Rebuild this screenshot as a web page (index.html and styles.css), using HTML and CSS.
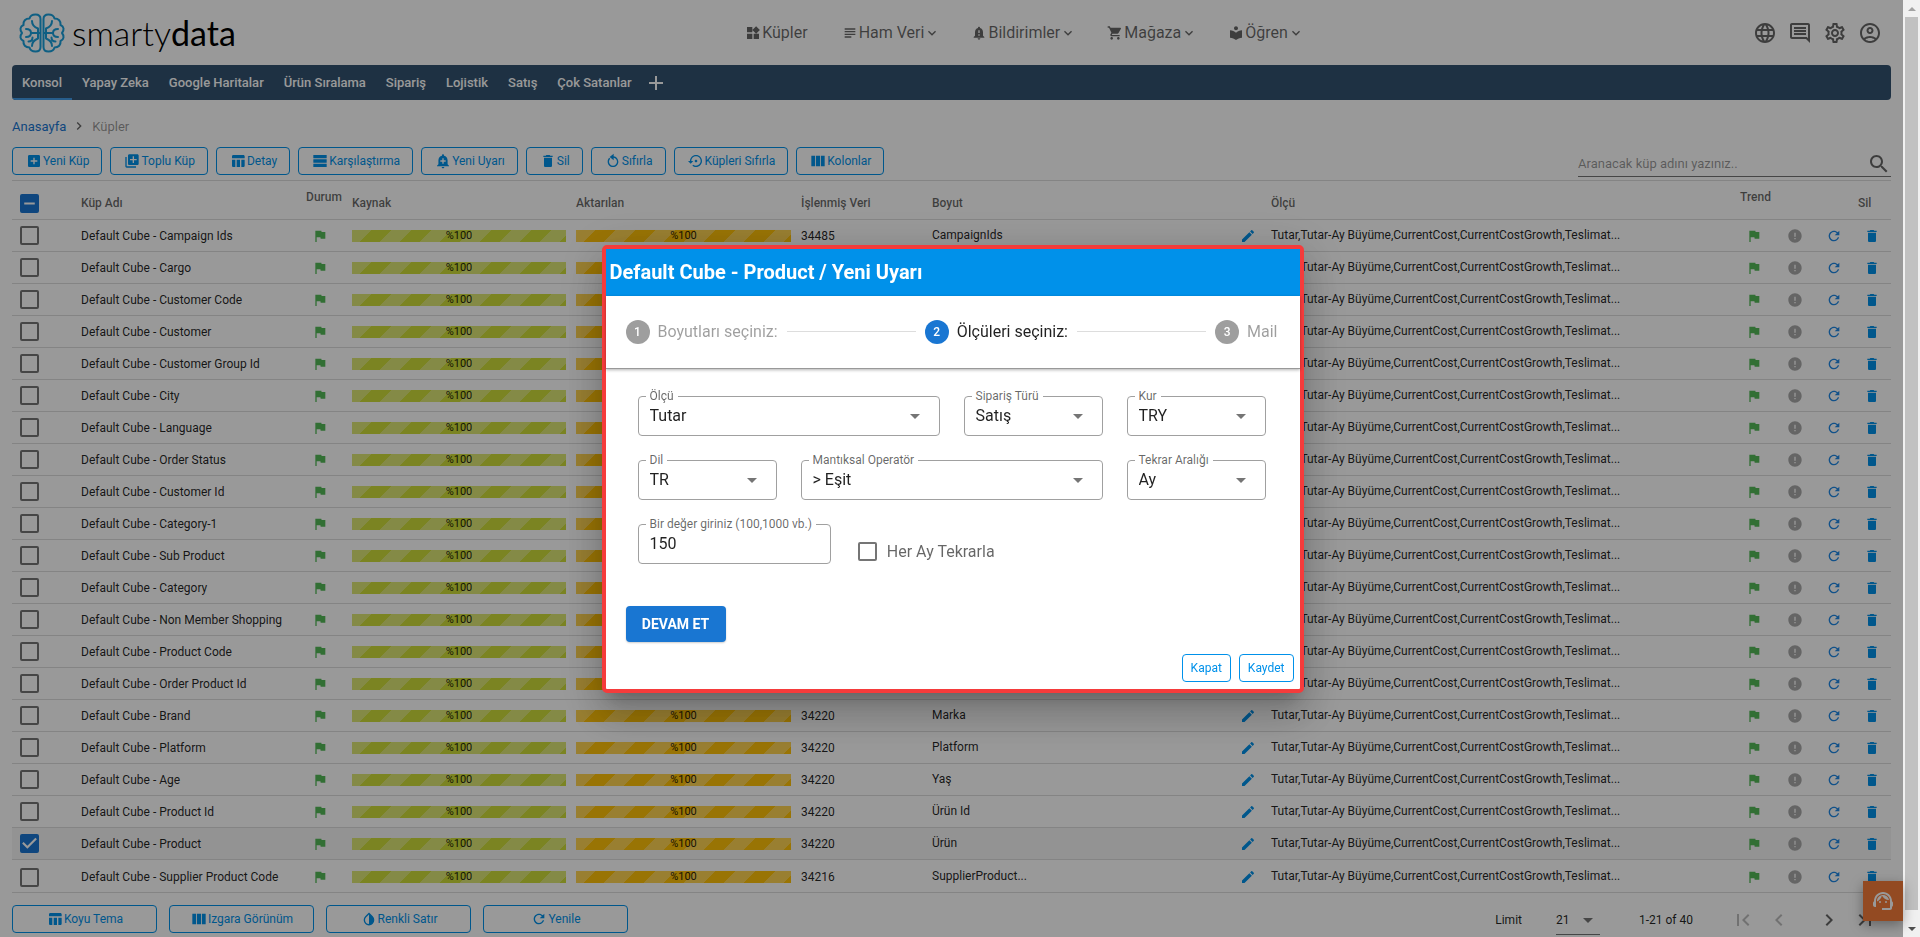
FILE: index.html
```html
<!DOCTYPE html>
<html lang="tr">
<head>
<meta charset="utf-8">
<title>smartydata</title>
<link rel="stylesheet" href="styles.css">
</head>
<body>
<svg class="sprite" aria-hidden="true">
  <symbol id="widgets" viewBox="0 0 24 24"><path d="M13 13v8h8v-8h-8zM3 21h8v-8H3v8zM3 3v8h8V3H3zm13.66-1.31L11 7.34 16.66 13l5.66-5.66-5.66-5.65z"/></symbol>
  <symbol id="subject" viewBox="0 0 24 24"><path d="M14 17H4v2h10v-2zm6-8H4v2h16V9zM4 15h16v-2H4v2zM4 5v2h16V5H4z"/></symbol>
  <symbol id="bell" viewBox="0 0 24 24"><path d="M18 16v-5c0-3.07-1.64-5.64-4.5-6.32V4c0-.83-.67-1.5-1.5-1.5s-1.5.67-1.5 1.5v.68C7.63 5.36 6 7.92 6 11v5l-2 2v1h16v-1l-2-2zm-5 0h-2v-2h2v2zm0-4h-2V8h2v4zm-1 10c1.1 0 2-.9 2-2h-4c0 1.1.89 2 2 2z"/></symbol>
  <symbol id="bell-add" viewBox="0 0 24 24"><path d="M10.01 21.01c0 1.1.89 1.99 1.99 1.99s1.99-.89 1.99-1.99h-3.98zm8.87-4.19V11c0-3.25-2.25-5.97-5.29-6.69v-.72C13.59 2.71 12.88 2 12 2s-1.59.71-1.59 1.59v.72C7.37 5.03 5.12 7.75 5.12 11v5.82L3 18.94V20h18v-1.06l-2.12-2.12zM16 13.01h-3v3h-2v-3H8V11h3V8h2v3h3v2.01z"/></symbol>
  <symbol id="cart" viewBox="0 0 24 24"><path d="M7 18c-1.1 0-1.99.9-1.99 2S5.9 22 7 22s2-.9 2-2-.9-2-2-2zM1 2v2h2l3.6 7.59-1.35 2.45c-.16.28-.25.61-.25.96 0 1.1.9 2 2 2h12v-2H7.42c-.14 0-.25-.11-.25-.25l.03-.12.9-1.63h7.45c.75 0 1.41-.41 1.75-1.03l3.58-6.49c.08-.14.12-.31.12-.48 0-.55-.45-1-1-1H5.21l-.94-2H1zm16 16c-1.1 0-1.99.9-1.99 2s.89 2 1.99 2 2-.9 2-2-.9-2-2-2z"/></symbol>
  <symbol id="library" viewBox="0 0 24 24"><path d="M12 11.55C9.64 9.35 6.48 8 3 8v11c3.48 0 6.64 1.35 9 3.55 2.36-2.19 5.52-3.55 9-3.55V8c-3.48 0-6.64 1.35-9 3.55zM12 8c1.66 0 3-1.34 3-3s-1.34-3-3-3-3 1.34-3 3 1.34 3 3 3z"/></symbol>
  <symbol id="chevron-down" viewBox="0 0 24 24"><path d="M7.41 8.59 12 13.17l4.59-4.58L18 10l-6 6-6-6 1.41-1.41z"/></symbol>
  <symbol id="globe" viewBox="0 0 24 24"><path d="M11.99 2C6.47 2 2 6.48 2 12s4.47 10 9.99 10C17.52 22 22 17.52 22 12S17.52 2 11.99 2zm6.93 6h-2.95c-.32-1.25-.78-2.45-1.38-3.56 1.84.63 3.37 1.91 4.33 3.56zM12 4.04c.83 1.2 1.48 2.53 1.91 3.96h-3.82c.43-1.43 1.08-2.76 1.91-3.96zM4.26 14C4.1 13.36 4 12.69 4 12s.1-1.36.26-2h3.38c-.08.66-.14 1.32-.14 2 0 .68.06 1.34.14 2H4.26zm.82 2h2.95c.32 1.25.78 2.45 1.38 3.56-1.84-.63-3.37-1.9-4.33-3.56zm2.95-8H5.08c.96-1.66 2.49-2.93 4.33-3.56C8.81 5.55 8.35 6.75 8.03 8zM12 19.96c-.83-1.2-1.48-2.53-1.91-3.96h3.82c-.43 1.43-1.08 2.76-1.91 3.96zM14.34 14H9.66c-.09-.66-.16-1.32-.16-2 0-.68.07-1.35.16-2h4.68c.09.65.16 1.32.16 2 0 .68-.07 1.34-.16 2zm.25 5.56c.6-1.11 1.06-2.31 1.38-3.56h2.95c-.96 1.65-2.49 2.93-4.33 3.56zM16.36 14c.08-.66.14-1.32.14-2 0-.68-.06-1.34-.14-2h3.38c.16.64.26 1.31.26 2s-.1 1.36-.26 2h-3.38z"/></symbol>
  <symbol id="comment" viewBox="0 0 24 24"><path d="M21.99 4c0-1.1-.89-2-1.99-2H4c-1.1 0-2 .9-2 2v12c0 1.1.9 2 2 2h14l4 4-.01-18zM20 4v13.17L18.83 16H4V4h16zM6 12h12v2H6zm0-3h12v2H6zm0-3h12v2H6z"/></symbol>
  <symbol id="settings" viewBox="0 0 24 24"><path d="M19.43 12.98c.04-.32.07-.64.07-.98 0-.34-.03-.66-.07-.98l2.11-1.65c.19-.15.24-.42.12-.64l-2-3.46c-.09-.16-.26-.25-.44-.25-.06 0-.12.01-.17.03l-2.49 1c-.52-.4-1.08-.73-1.69-.98l-.38-2.65C14.46 2.18 14.25 2 14 2h-4c-.25 0-.46.18-.49.42l-.38 2.65c-.61.25-1.17.59-1.69.98l-2.49-1c-.06-.02-.12-.03-.18-.03-.17 0-.34.09-.43.25l-2 3.46c-.13.22-.07.49.12.64l2.11 1.65c-.04.32-.07.65-.07.98 0 .33.03.66.07.98l-2.11 1.65c-.19.15-.24.42-.12.64l2 3.46c.09.16.26.25.44.25.06 0 .12-.01.17-.03l2.49-1c.52.4 1.08.73 1.69.98l.38 2.65c.03.24.24.42.49.42h4c.25 0 .46-.18.49-.42l.38-2.65c.61-.25 1.17-.59 1.69-.98l2.49 1c.06.02.12.03.18.03.17 0 .34-.09.43-.25l2-3.46c.12-.22.07-.49-.12-.64l-2.11-1.65zm-1.98-1.71c.04.31.05.52.05.73 0 .21-.02.43-.05.73l-.14 1.13.89.7 1.08.84-.7 1.21-1.27-.51-1.04-.42-.9.68c-.43.32-.84.56-1.25.73l-1.06.43-.16 1.13-.2 1.35h-1.4l-.19-1.35-.16-1.13-1.06-.43c-.43-.18-.83-.41-1.23-.71l-.91-.7-1.06.43-1.27.51-.7-1.21 1.08-.84.89-.7-.14-1.13c-.03-.31-.05-.54-.05-.74s.02-.43.05-.73l.14-1.13-.89-.7-1.08-.84.7-1.21 1.27.51 1.04.42.9-.68c.43-.32.84-.56 1.25-.73l1.06-.43.16-1.13.2-1.35h1.39l.19 1.35.16 1.13 1.06.43c.43.18.83.41 1.23.71l.91.7 1.06-.43 1.27-.51.7 1.21-1.07.85-.89.7.14 1.13zM12 8c-2.21 0-4 1.79-4 4s1.79 4 4 4 4-1.79 4-4-1.79-4-4-4zm0 6c-1.1 0-2-.9-2-2s.9-2 2-2 2 .9 2 2-.9 2-2 2z"/></symbol>
  <symbol id="account" viewBox="0 0 24 24"><path d="M12 2C6.48 2 2 6.48 2 12s4.48 10 10 10 10-4.48 10-10S17.52 2 12 2zM7.35 18.5C8.66 17.56 10.26 17 12 17s3.34.56 4.65 1.5C15.34 19.44 13.74 20 12 20s-3.34-.56-4.65-1.5zm10.79-1.38C16.45 15.8 14.32 15 12 15s-4.45.8-6.14 2.12C4.7 15.73 4 13.95 4 12c0-4.42 3.58-8 8-8s8 3.58 8 8c0 1.95-.7 3.73-1.86 5.12zM12 6c-1.93 0-3.5 1.57-3.5 3.5S10.07 13 12 13s3.5-1.57 3.5-3.5S13.93 6 12 6zm0 5c-.83 0-1.5-.67-1.5-1.5S11.17 8 12 8s1.5.67 1.5 1.5S12.83 11 12 11z"/></symbol>
  <symbol id="plus" viewBox="0 0 24 24"><path d="M19 13h-6v6h-2v-6H5v-2h6V5h2v6h6v2z"/></symbol>
  <symbol id="add-box" viewBox="0 0 24 24"><path d="M19 3H5c-1.11 0-2 .9-2 2v14c0 1.1.89 2 2 2h14c1.1 0 2-.9 2-2V5c0-1.1-.9-2-2-2zm-2 10h-4v4h-2v-4H7v-2h4V7h2v4h4v2z"/></symbol>
  <symbol id="library-add" viewBox="0 0 24 24"><path d="M4 6H2v14c0 1.1.9 2 2 2h14v-2H4V6zm16-4H8c-1.1 0-2 .9-2 2v12c0 1.1.9 2 2 2h12c1.1 0 2-.9 2-2V4c0-1.1-.9-2-2-2zm-1 9h-4v4h-2v-4H9V9h4V5h2v4h4v2z"/></symbol>
  <symbol id="table-chart" viewBox="0 0 24 24"><path d="M10 10.02h5V21h-5zM17 21h3c1.1 0 2-.9 2-2v-9h-5v11zm3-18H5c-1.1 0-2 .9-2 2v3h19V5c0-1.1-.9-2-2-2zM3 19c0 1.1.9 2 2 2h3V10H3v9z"/></symbol>
  <symbol id="rows" viewBox="0 0 24 24"><path d="M2 3h20v5H2zM2 9.500h20v5H2zM2 16h20v5H2z"/></symbol>
  <symbol id="trash" viewBox="0 0 24 24"><path d="M6 19c0 1.1.9 2 2 2h8c1.1 0 2-.9 2-2V7H6v12zM19 4h-3.500l-1-1h-5l-1 1H5v2h14V4z"/></symbol>
  <symbol id="rotate" viewBox="0 0 24 24"><path d="M13 5V1L7 6l6 5V7.100c2.800.5 5 2.900 5 5.900 0 3.300-2.700 6-6 6s-6-2.700-6-6c0-1.700.7-3.200 1.800-4.300L6.400 7.300C4.900 8.700 4 10.800 4 13c0 4.400 3.600 8 8 8s8-3.600 8-8c0-4.100-3.100-7.400-7-8z"/></symbol>
  <symbol id="restore" viewBox="0 0 24 24"><path d="M14 12c0-1.1-.9-2-2-2s-2 .9-2 2 .9 2 2 2 2-.9 2-2zm-2-9c-4.970 0-9 4.030-9 9H0l4 4 4-4H5c0-3.870 3.130-7 7-7s7 3.130 7 7-3.130 7-7 7c-1.510 0-2.910-.49-4.060-1.300l-1.420 1.440C8.040 20.300 9.940 21 12 21c4.970 0 9-4.030 9-9s-4.030-9-9-9z"/></symbol>
  <symbol id="columns" viewBox="0 0 24 24"><path d="M2 4h5.700v16H2zM9 4h6v16H9zM16.300 4H22v16h-5.700z"/></symbol>
  <symbol id="invert" viewBox="0 0 24 24"><path d="M17.660 7.930 12 2.270 6.340 7.930c-3.120 3.120-3.120 8.190 0 11.310C7.900 20.800 9.950 21.580 12 21.580s4.100-.78 5.660-2.340c3.120-3.120 3.120-8.190 0-11.310zM12 19.590c-1.600 0-3.110-.62-4.240-1.760C6.620 16.690 6 15.190 6 13.590s.62-3.110 1.760-4.240L12 5.100v14.490z"/></symbol>
  <symbol id="refresh" viewBox="0 0 24 24"><path d="M17.650 6.350C16.200 4.900 14.210 4 12 4c-4.420 0-7.990 3.580-7.990 8s3.570 8 7.990 8c3.730 0 6.840-2.550 7.730-6h-2.080c-.82 2.330-3.040 4-5.650 4-3.310 0-6-2.690-6-6s2.690-6 6-6c1.660 0 3.140.69 4.220 1.780L13 11h7V4l-2.350 2.350z"/></symbol>
  <symbol id="flag" viewBox="0 0 24 24"><path d="M14.400 6 14 4H5v17h2v-7h5.600l.4 2h7V6z"/></symbol>
  <symbol id="error" viewBox="0 0 24 24"><path d="M12 2C6.480 2 2 6.480 2 12s4.480 10 10 10 10-4.480 10-10S17.520 2 12 2zm1 15h-2v-2h2v2zm0-4h-2V7h2v6z"/></symbol>
  <symbol id="edit" viewBox="0 0 24 24"><path d="M3 17.250V21h3.750L17.810 9.940l-3.750-3.750L3 17.250zM20.710 7.040c.39-.39.39-1.020 0-1.410l-2.340-2.340c-.39-.39-1.020-.39-1.410 0l-1.830 1.830 3.750 3.750 1.830-1.830z"/></symbol>
  <symbol id="search" viewBox="0 0 24 24"><path d="M15.500 14h-.79l-.28-.27C15.410 12.590 16 11.110 16 9.500 16 5.910 13.090 3 9.500 3S3 5.910 3 9.500 5.910 16 9.500 16c1.610 0 3.090-.59 4.230-1.570l.27.28v.79l5 4.990L20.490 19l-4.990-5zm-6 0C7.010 14 5 11.990 5 9.500S7.010 5 9.500 5 14 7.010 14 9.500 11.990 14 9.500 14z"/></symbol>
  <symbol id="first" viewBox="0 0 24 24"><path d="M18.410 16.590 13.820 12l4.590-4.590L17 6l-6 6 6 6zM6 6h2v12H6z"/></symbol>
  <symbol id="prev" viewBox="0 0 24 24"><path d="M15.410 7.410 14 6l-6 6 6 6 1.410-1.410L10.830 12z"/></symbol>
  <symbol id="next" viewBox="0 0 24 24"><path d="M10 6 8.590 7.410 13.170 12l-4.580 4.590L10 18l6-6z"/></symbol>
  <symbol id="last" viewBox="0 0 24 24"><path d="M5.590 7.410 10.180 12l-4.590 4.590L7 18l6-6-6-6zM16 6h2v12h-2z"/></symbol>
  <symbol id="agent" viewBox="0 0 24 24"><path d="M21 12.220C21 6.730 16.740 3 12 3c-4.690 0-9 3.650-9 9.280-.6.340-1 .98-1 1.720v2c0 1.100.9 2 2 2h1v-6.100c0-3.870 3.130-7 7-7s7 3.130 7 7V19h-8v2h8c1.100 0 2-.9 2-2v-1.220c.59-.31 1-.92 1-1.640v-2.300c0-.7-.41-1.310-1-1.620z"/><circle cx="9" cy="13" r="1"/><circle cx="15" cy="13" r="1"/><path d="M18 11.030C17.520 8.180 15.040 6 12.050 6c-3.030 0-6.290 2.510-6.030 6.450 2.470-1.010 4.330-3.210 4.860-5.890 1.310 2.630 4 4.440 7.120 4.470z"/></symbol>
</svg>

<div class="app">
  <header class="header">
    <a class="logo" href="#">
      <svg class="logo-mark" viewBox="0 0 48 40" aria-hidden="true">
        <g id="lobe">
          <path d="M22.500 6v28c0 3-2 4.500-5 4.500-3.500 0-5.500-2-6-4-4 0-6.500-2.500-6-6.500C2 26.500 1.500 23 4 20 1.500 17 2 13.500 5.500 12 5 8 7.500 5.500 11.500 5.500c.5-2 2.500-4 6-4 3 0 5 1.500 5 4.500z"/>
          <path d="M22 20h-9m-5-4c3.500 0 5 1.500 5 4s-1.500 4-5 4M14 8c0 4 2 6 6 7.500V20M10.500 28.500c3 0 4-2 4-4M14 33c0-4 2-6 6-7.500V20"/>
        </g>
        <use href="#lobe" transform="matrix(-1 0 0 1 48 0)"/>
      </svg>
      <span class="logo-text">smarty<b>data</b></span>
    </a>
    <nav class="main-nav">
      <a href="#"><svg><use href="#widgets"/></svg>Küpler</a>
      <a href="#"><svg><use href="#subject"/></svg>Ham Veri<svg class="chev"><use href="#chevron-down"/></svg></a>
      <a href="#"><svg><use href="#bell"/></svg>Bildirimler<svg class="chev"><use href="#chevron-down"/></svg></a>
      <a href="#"><svg><use href="#cart"/></svg>Mağaza<svg class="chev"><use href="#chevron-down"/></svg></a>
      <a href="#"><svg><use href="#library"/></svg>Öğren<svg class="chev"><use href="#chevron-down"/></svg></a>
    </nav>
    <div class="tools">
      <button aria-label="Dil"><svg><use href="#globe"/></svg></button>
      <button aria-label="Mesajlar"><svg><use href="#comment"/></svg></button>
      <button aria-label="Ayarlar"><svg><use href="#settings"/></svg></button>
      <button aria-label="Hesap"><svg><use href="#account"/></svg></button>
    </div>
  </header>

  <nav class="tabs">
    <a class="active" href="#">Konsol</a><a href="#">Yapay Zeka</a><a href="#">Google Haritalar</a><a href="#">Ürün Sıralama</a><a href="#">Sipariş</a><a href="#">Lojistik</a><a href="#">Satış</a><a href="#">Çok Satanlar</a>
    <button aria-label="Ekle"><svg><use href="#plus"/></svg></button>
  </nav>

  <nav class="crumbs"><a href="#">Anasayfa</a><svg><use href="#next"/></svg><span>Küpler</span></nav>

  <div class="actions">
    <button class="btn"><svg><use href="#add-box"/></svg>Yeni Küp</button>
    <button class="btn"><svg><use href="#library-add"/></svg>Toplu Küp</button>
    <button class="btn"><svg><use href="#table-chart"/></svg>Detay</button>
    <button class="btn"><svg><use href="#rows"/></svg>Karşılaştırma</button>
    <button class="btn"><svg><use href="#bell-add"/></svg>Yeni Uyarı</button>
    <button class="btn"><svg><use href="#trash"/></svg>Sil</button>
    <button class="btn"><svg><use href="#rotate"/></svg>Sıfırla</button>
    <button class="btn"><svg><use href="#restore"/></svg>Küpleri Sıfırla</button>
    <button class="btn"><svg><use href="#columns"/></svg>Kolonlar</button>
    <label class="search"><input type="text" aria-label="Ara" placeholder="Aranacak küp adını yazınız.."><svg><use href="#search"/></svg></label>
  </div>

  <table class="cubes">
    <colgroup><col class="c-check"><col class="c-name"><col class="c-state"><col class="c-bar"><col class="c-bar"><col class="c-count"><col class="c-dim"><col class="c-edit"><col><col class="c-trend"><col class="c-error"><col class="c-icon"><col class="c-icon"></colgroup>
    <thead>
      <tr><th class="check"><input type="checkbox" class="some" aria-label="Tümünü seç"></th><th>Küp Adı</th><th class="raised">Durum</th><th>Kaynak</th><th>Aktarılan</th><th>İşlenmiş Veri</th><th>Boyut</th><th></th><th>Ölçü</th><th class="raised trend">Trend</th><th></th><th></th><th>Sil</th></tr>
    </thead>
    <tbody id="rows-body"></tbody>
  </table>

  <footer class="footer">
    <button class="btn wide"><svg><use href="#table-chart"/></svg>Koyu Tema</button>
    <button class="btn wide"><svg><use href="#columns"/></svg>Izgara Görünüm</button>
    <button class="btn wide"><svg><use href="#invert"/></svg>Renkli Satır</button>
    <button class="btn wide"><svg><use href="#refresh"/></svg>Yenile</button>
    <div class="pager">
      <label for="limit">Limit</label>
      <select id="limit"><option>21</option></select>
      <span class="range">1-21 of 40</span>
      <button disabled aria-label="İlk"><svg><use href="#first"/></svg></button>
      <button disabled aria-label="Önceki"><svg><use href="#prev"/></svg></button>
      <button aria-label="Sonraki"><svg><use href="#next"/></svg></button>
      <button aria-label="Son"><svg><use href="#last"/></svg></button>
    </div>
  </footer>
  <button class="support" aria-label="Destek"><svg><use href="#agent"/></svg></button>
</div>

<div class="scrollbar" aria-hidden="true"><i class="up"></i><div class="thumb"></div><i class="down"></i></div>

<div class="backdrop">
  <section class="dialog" role="dialog" aria-labelledby="dialog-title">
    <h2 id="dialog-title">Default Cube - Product / Yeni Uyarı</h2>
    <ol class="stepper">
      <li><span class="dot">1</span>Boyutları seçiniz:</li>
      <li class="line"></li>
      <li class="current"><span class="dot">2</span>Ölçüleri seçiniz:</li>
      <li class="line"></li>
      <li><span class="dot">3</span>Mail</li>
    </ol>
    <form class="form">
      <div class="field span6"><label for="f1">Ölçü</label><select id="f1"><option>Tutar</option></select></div>
      <div class="field span3"><label for="f2">Sipariş Türü</label><select id="f2"><option>Satış</option></select></div>
      <div class="field span3"><label for="f3">Kur</label><select id="f3"><option>TRY</option></select></div>
      <div class="field span3"><label for="f4">Dil</label><select id="f4"><option>TR</option></select></div>
      <div class="field span6"><label for="f5">Mantıksal Operatör</label><select id="f5"><option>&gt; Eşit</option></select></div>
      <div class="field span3"><label for="f6">Tekrar Aralığı</label><select id="f6"><option>Ay</option></select></div>
      <div class="field span4"><label for="f7">Bir değer giriniz (100,1000 vb.)</label><input id="f7" type="text" value="150"></div>
      <label class="repeat"><input type="checkbox">Her Ay Tekrarla</label>
    </form>
    <button class="continue">DEVAM ET</button>
    <div class="dialog-actions"><button>Kapat</button><button>Kaydet</button></div>
  </section>
</div>
<script src="rows.js"></script>
</body>
</html>
```

FILE: styles.css
```css
* { box-sizing: border-box; }

body {
  margin: 0;
  height: 100vh;
  display: flex;
  overflow: hidden;
  background: #fff;
  color: rgba(0, 0, 0, .87);
  font-family: Roboto, "Noto Sans", sans-serif;
  font-size: 12px;
}

button, input, select { font-family: inherit; margin: 0; }
button { cursor: pointer; background: none; border: 0; padding: 0; }
a { text-decoration: none; color: inherit; }
svg { fill: currentColor; width: 16px; height: 16px; flex: none; }
.sprite { position: absolute; width: 0; height: 0; }

.app { position: relative; flex: 1; min-width: 0; padding: 0 12px; }

/* Header */
.header { display: flex; align-items: center; height: 65px; padding: 0 9px 0 5px; }
.logo { display: flex; align-items: center; gap: 5px; width: 276px; }
.logo-mark { width: 50px; height: 40px; fill: none; stroke: #199fdb; stroke-width: 2; stroke-linecap: round; stroke-linejoin: round; }
.logo-text { font-family: Lato, sans-serif; font-weight: 300; font-size: 34px; line-height: 40px; color: #000; }
.logo-text b { font-weight: 400; }
.main-nav { display: flex; gap: 34px; margin: 0 auto; color: rgba(0, 0, 0, .6); font-size: 16px; }
.main-nav a { display: flex; align-items: center; gap: 1px; }
.main-nav .chev { margin: 0 -3px 0 -1px; }
.tools { display: flex; gap: 11px; color: rgba(0, 0, 0, .6); }
.tools button { display: flex; color: inherit; }
.tools svg { width: 24px; height: 24px; }

/* Tabs */
.tabs { display: flex; align-items: stretch; height: 35px; border-radius: 4px; background: #325371; color: #fff; font-size: 13px; font-weight: 500; overflow: hidden; }
.tabs a { display: flex; align-items: center; padding: 2px 10px 0; border-bottom: 2px solid transparent; }
.tabs .active { border-color: #429be8; }
.tabs button { display: flex; align-items: center; color: #fff; padding: 0 2px; }
.tabs svg { width: 24px; height: 24px; }

.crumbs { display: flex; align-items: center; gap: 5px; height: 47px; padding-top: 5px; font-size: 13px; color: rgba(0, 0, 0, .42); }
.crumbs a { color: #1976d2; }
.crumbs svg { color: rgba(0, 0, 0, .6); }

/* Toolbar */
.actions { display: flex; gap: 8px; height: 33px; align-items: flex-start; }
.btn { display: flex; align-items: center; justify-content: center; gap: 1px; height: 28px; padding: 0 12px 0 13px; border: 1px solid #0091ea; border-radius: 4px; color: #0091ea; font-size: 12px; white-space: nowrap; }
.search { display: flex; align-items: center; width: 313px; height: 30px; margin-left: auto; padding: 4px 0 0; border-bottom: 1px solid rgba(0, 0, 0, .54); color: rgba(0, 0, 0, .6); }
.search input { flex: 1; min-width: 0; border: 0; outline: 0; padding: 0; background: none; font-size: 13px; }
.search input::placeholder { color: rgba(0, 0, 0, .42); }
.search svg { width: 24px; height: 24px; }

/* Table */
.cubes { width: 100%; table-layout: fixed; border-collapse: separate; border-spacing: 0; border-top: 1px solid #ddd; }
.c-check { width: 64px; }
.c-name { width: 225px; }
.c-state { width: 46px; }
.c-bar { width: 224px; }
.c-bar + .c-bar { width: 225px; }
.c-count { width: 131px; }
.c-dim { width: 302px; }
.c-edit { width: 37px; }
.c-trend { width: 43px; }
.c-error { width: 40px; }
.c-icon { width: 38px; }
.cubes th, .cubes td { height: 32px; padding: 0 5px; border-bottom: 1px solid #ddd; text-align: left; vertical-align: middle; white-space: nowrap; line-height: 16px; }
.cubes th { height: 39px; padding-top: 6px; color: rgba(0, 0, 0, .6); font-weight: 500; }
.cubes th.raised { padding: 0 0 7px; text-align: center; }
.cubes th.trend { padding-left: 4px; }
.cubes .check { padding-left: 8px; }
.cubes td.icon { padding: 0; }
.cubes td.state { padding-right: 8px; }
.cubes td svg { display: block; margin: 0 auto; }
.cubes td.raised { padding-bottom: 2px; overflow: hidden; text-overflow: ellipsis; }
.cubes .selected td { background: rgba(0, 0, 0, .04); }
.cubes tbody tr:last-child td { height: 33px; padding-top: 2px; }
.green { color: #54b958; }
.gray { color: #a8a8a8; }
.blue { color: #0091ea; }
.link { color: #1e88e5; }

.bar { height: 12px; line-height: 12px; text-align: center; font-size: 11px; color: rgba(0, 0, 0, .87); background-color: #cddc39; background-image: linear-gradient(135deg, rgba(255, 255, 255, .3) 25%, transparent 25%, transparent 50%, rgba(255, 255, 255, .3) 50%, rgba(255, 255, 255, .3) 75%, transparent 75%); background-size: 40px 40px; }
.bar.amber { background-color: #ffc107; }

input[type="checkbox"] { appearance: none; display: block; flex: none; width: 19px; height: 19px; border: 2px solid rgba(0, 0, 0, .54); border-radius: 2px; background: center / 19px 19px no-repeat; }
input[type="checkbox"]:checked, input[type="checkbox"].some { border-color: #1976d2; background-color: #1976d2; }
input[type="checkbox"]:checked { background-image: url("data:image/svg+xml,%3Csvg xmlns='http://www.w3.org/2000/svg' viewBox='0 0 18 18'%3E%3Cpath d='M7 14 2 9l1.400-1.400L7 11.200l7.600-7.600L16 5z' fill='%23fff'/%3E%3C/svg%3E"); }
input[type="checkbox"].some { background-image: url("data:image/svg+xml,%3Csvg xmlns='http://www.w3.org/2000/svg' viewBox='0 0 18 18'%3E%3Cpath d='M4 8h10v2H4z' fill='%23fff'/%3E%3C/svg%3E"); }

/* Footer */
.footer { display: flex; gap: 12px; padding-top: 12px; }
.btn.wide { width: 145px; }
.pager { display: flex; align-items: center; margin-left: auto; padding-right: 14px; height: 30px; font-size: 12px; }
.pager label { padding-right: 34px; }
select { appearance: none; outline: 0; color: inherit; background: no-repeat right 0 center / 24px 24px url("data:image/svg+xml,%3Csvg xmlns='http://www.w3.org/2000/svg' viewBox='0 0 24 24'%3E%3Cpath d='M7 10l5 5 5-5z' fill='%23757575'/%3E%3C/svg%3E"); }
.pager select { width: 44px; height: 30px; padding: 0; border: 0; border-bottom: 1px solid rgba(0, 0, 0, .54); border-radius: 0; font-size: 12px; }
.pager .range { padding: 0 38px 0 39px; }
.pager button { display: flex; width: 24px; color: rgba(0, 0, 0, .6); }
.pager button + button { margin-left: 12px; }
.pager button:disabled { color: rgba(0, 0, 0, .26); }
.pager button:nth-of-type(3) { margin-left: 26px; }
.pager svg { width: 24px; height: 24px; }

.support { position: absolute; right: 0; bottom: 16px; width: 40px; height: 40px; display: flex; align-items: center; justify-content: center; background: #f57c3a; color: #fff; box-shadow: 0 4px 12px rgba(0, 0, 0, .35); }
.support svg { width: 24px; height: 24px; }

.scrollbar { display: flex; flex-direction: column; align-items: center; width: 17px; height: 100vh; background: #f1f1f1; }
.scrollbar i { flex: none; height: 17px; display: flex; align-items: center; }
.scrollbar i::before { content: ""; border: 4px solid transparent; border-top-width: 0; border-bottom-color: #a3a3a3; }
.scrollbar .down::before { border-width: 4px 4px 0; border-color: #505050 transparent transparent; }
.thumb { flex: 1; width: 13px; margin-bottom: 10px; background: #c1c1c1; }

/* Dialog */
.backdrop { position: fixed; inset: 0 17px 0 0; display: flex; align-items: center; justify-content: center; padding-left: 2px; background: rgba(0, 0, 0, .4); }
.dialog { width: 702px; border: 4px solid #f53b3b; border-radius: 5px; background: #fff; box-shadow: 0 11px 15px -7px rgba(0, 0, 0, .2), 0 24px 38px 3px rgba(0, 0, 0, .14), 0 9px 46px 8px rgba(0, 0, 0, .12); }
.dialog h2 { margin: 0; padding: 0 4px; background: #0091ea; color: #fff; font-size: 20px; font-weight: 700; line-height: 47px; }
.stepper { display: flex; align-items: center; gap: 9px; height: 73px; margin: 0; padding: 0 22px 0 20px; list-style: none; border-bottom: 1px solid #999; box-shadow: 0 1px 3px rgba(0, 0, 0, .3); font-size: 16px; color: rgba(0, 0, 0, .38); }
.stepper li { display: flex; align-items: center; gap: 8px; }
.stepper .current { color: rgba(0, 0, 0, .87); }
.stepper .line { flex: 1; height: 1px; background: #ddd; }
.dot { width: 24px; height: 24px; border-radius: 50%; background: #9e9e9e; color: #fff; font-size: 12px; font-weight: 500; line-height: 24px; text-align: center; }
.current .dot { background: #1976d2; }
.form { display: grid; grid-template-columns: repeat(12, 1fr); gap: 24px; padding: 27px 34px 42px 32px; }
.span3 { grid-column: span 3; }
.span4 { grid-column: span 4; }
.span6 { grid-column: span 6; }
.field { position: relative; }
.field label { position: absolute; top: -7px; left: 8px; padding: 0 4px; background: #fff; color: rgba(0, 0, 0, .6); font-size: 12px; line-height: 14px; white-space: nowrap; }
.field select, .field input { display: block; width: 100%; height: 40px; padding: 0 12px 0 11px; border: 1px solid #a0a0a0; border-radius: 4px; outline: 0; color: rgba(0, 0, 0, .87); font-size: 16px; }
.field select { background-position: right 12px center; }
.repeat { grid-column: span 6; align-self: end; display: flex; align-items: center; gap: 10px; height: 24px; padding-left: 3px; color: rgba(0, 0, 0, .6); font-size: 16px; }
.continue { display: block; margin-left: 20px; width: 100px; height: 36px; border-radius: 4px; background: #1976d2; color: #fff; font-size: 14px; font-weight: 700; box-shadow: 0 1px 2px rgba(0, 0, 0, .2); }
.dialog-actions { display: flex; justify-content: flex-end; gap: 8px; padding: 12px 6px 7px; }
.dialog-actions button { height: 28px; padding: 0 8px; border: 1px solid #0091ea; border-radius: 4px; color: #0091ea; font-size: 12px; }
```

FILE: rows.js
```js
const cubes = [
  ["Campaign Ids", "34485", "CampaignIds"],
  ["Cargo", "34220", "Kargo"],
  ["Customer Code", "34220", "Müşteri Kodu"],
  ["Customer", "34220", "Müşteri"],
  ["Customer Group Id", "34220", "Müşteri Grubu"],
  ["City", "34220", "Şehir"],
  ["Language", "34220", "Dil"],
  ["Order Status", "34220", "Sipariş Durumu"],
  ["Customer Id", "34220", "Müşteri Id"],
  ["Category-1", "34220", "Kategori-1"],
  ["Sub Product", "34220", "Alt Ürün"],
  ["Category", "34220", "Kategori"],
  ["Non Member Shopping", "34220", "Üyesiz Alışveriş"],
  ["Product Code", "34220", "Ürün Kodu"],
  ["Order Product Id", "34220", "Sipariş Ürün Id"],
  ["Brand", "34220", "Marka"],
  ["Platform", "34220", "Platform"],
  ["Age", "34220", "Yaş"],
  ["Product Id", "34220", "Ürün Id"],
  ["Product", "34220", "Ürün", true],
  ["Supplier Product Code", "34216", "SupplierProduct..."]
];
const icon = (name, color) => `<svg class="${color}"><use href="#${name}"/></svg>`;

document.getElementById("rows-body").innerHTML = cubes.map(([name, count, dim, selected]) => `
  <tr class="${selected ? "selected" : ""}">
    <td class="check"><input type="checkbox" aria-label="${name}" ${selected ? "checked" : ""}></td>
    <td>Default Cube - ${name}</td>
    <td class="icon state">${icon("flag", "green")}</td>
    <td><div class="bar">%100</div></td>
    <td><div class="bar amber">%100</div></td>
    <td>${count}</td>
    <td class="raised">${dim}</td>
    <td class="icon">${icon("edit", "blue")}</td>
    <td class="raised">Tutar,Tutar-Ay Büyüme,CurrentCost,CurrentCostGrowth,Teslimat...</td>
    <td class="icon">${icon("flag", "green")}</td>
    <td class="icon">${icon("error", "gray")}</td>
    <td class="icon">${icon("refresh", "link")}</td>
    <td class="icon">${icon("trash", "blue")}</td>
  </tr>`).join("");
```
